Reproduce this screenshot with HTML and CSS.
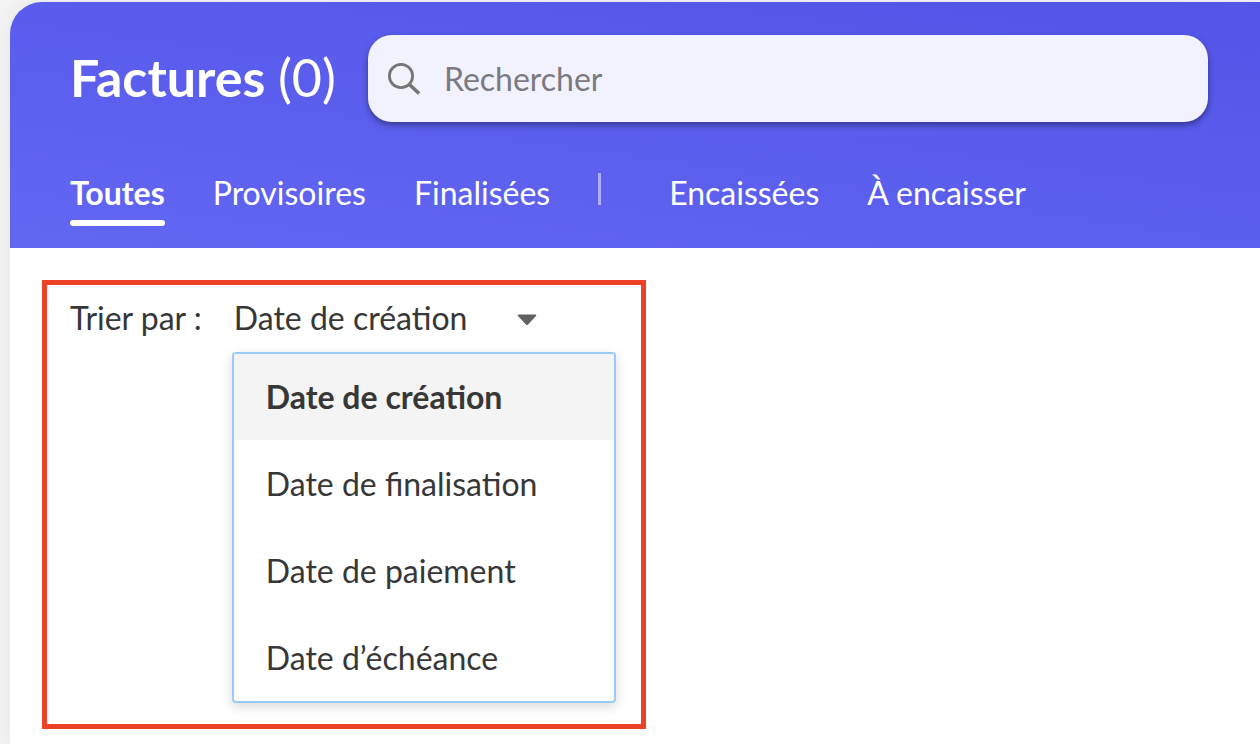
FILE: index.html
```html
<!DOCTYPE html>
<html lang="fr">
<head>
  <meta charset="UTF-8">
  <meta name="viewport" content="width=device-width, initial-scale=1.0">
  <title>Factures</title>
  <link rel="stylesheet" href="styles.css">
</head>
<body>

  <main class="page">
    <header class="header">
      <div class="header-top">
        <h1 class="title">Factures <span class="count">(0)</span></h1>
        <label class="search">
          <svg class="search-icon" width="32" height="32" viewBox="0 0 32 32" fill="none" stroke="#757575" aria-hidden="true">
            <circle cx="13" cy="13" r="11.6" stroke-width="2.8"/>
            <path d="M21.5 21.5L31 30.5" stroke-width="3.6"/>
          </svg>
          <input class="search-input" type="search" placeholder="Rechercher" aria-label="Rechercher">
        </label>
      </div>

      <nav class="tabs">
        <a class="tab active" href="#toutes">Toutes</a>
        <a class="tab" href="#provisoires">Provisoires</a>
        <a class="tab" href="#finalisees">Finalisées</a>
        <span class="divider"></span>
        <a class="tab" href="#encaissees">Encaissées</a>
        <a class="tab" href="#a-encaisser">À encaisser</a>
      </nav>
    </header>

    <section class="sort">
      <label class="sort-label" for="sort">Trier par :</label>
      <div class="sort-field">
        <div class="select-wrap">
          <select class="sort-select" id="sort">
            <option>Date de création</option>
            <option>Date de finalisation</option>
            <option>Date de paiement</option>
            <option>Date d’échéance</option>
          </select>
          <svg class="caret" width="20" height="12" viewBox="0 0 20 12" aria-hidden="true">
            <path d="M1.5 0.5H18.5Q20 0.8 19 2L11 10.5Q10 11.5 9 10.5L1 2Q0 0.8 1.5 0.5Z" fill="#616161"/>
          </svg>
        </div>
        <ul class="menu">
          <li><button type="button" class="menu-item selected">Date de création</button></li>
          <li><button type="button" class="menu-item">Date de finalisation</button></li>
          <li><button type="button" class="menu-item">Date de paiement</button></li>
          <li><button type="button" class="menu-item">Date d’échéance</button></li>
        </ul>
      </div>
    </section>
  </main>

  <script>
    const sortSelect = document.getElementById('sort');
    const items = document.querySelectorAll('.menu-item');

    items.forEach((item, index) => {
      item.addEventListener('click', () => {
        sortSelect.selectedIndex = index;
        items.forEach(other => other.classList.toggle('selected', other === item));
      });
    });
  </script>

</body>
</html>
```
FILE: styles.css
```css
* {
  box-sizing: border-box;
}

body {
  margin: 0;
  padding: 2px 0 0 10px;
  background: #f3f3f3;
  color: #373737;
  font-family: Lato, sans-serif;
  font-size: 32px;
  line-height: 40px;
}

input, select, button {
  font: inherit;
  color: inherit;
}

.page {
  min-height: calc(100vh - 2px);
  background: #fff;
  border-radius: 32px 0 0 0;
  box-shadow: 0 0 20px rgba(0, 0, 0, 0.06);
}

.header {
  padding: 33px 52px 22px 60px;
  background: linear-gradient(8deg, #6267f2 0%, #5354e8 100%);
  border-radius: 32px 0 0 0;
  color: #fff;
}

.header-top {
  display: flex;
  align-items: center;
  gap: 32px;
}

.title {
  margin: 0;
  padding-bottom: 4px;
  font-size: 52px;
  font-weight: bold;
  line-height: 64px;
  white-space: nowrap;
}

.count {
  font-weight: normal;
}

.search {
  display: flex;
  flex: 1;
  align-items: center;
  gap: 24px;
  padding: 20px;
  background: #f2f2ff;
  border-radius: 24px;
  box-shadow: 0 3px 6px rgba(0, 0, 0, 0.4);
}

.search-input {
  flex: 1;
  min-width: 0;
  height: 47px;
  padding: 0;
  border: 0;
  outline: 0;
  background: none;
  color: #373737;
}

.search-input::placeholder {
  color: #7a7a80;
}

.tabs {
  display: flex;
  gap: 48px;
  margin-top: 51px;
}

.tab {
  padding-bottom: 13px;
  color: #fff;
  text-decoration: none;
}

.tab.active {
  position: relative;
  font-weight: bold;
}

.tab.active::after {
  content: "";
  position: absolute;
  left: 0;
  right: 0;
  bottom: 0;
  height: 6px;
  border-radius: 3px;
  background: #fff;
}

.divider {
  width: 3px;
  height: 32px;
  margin-right: 20px;
  background: rgba(255, 255, 255, 0.5);
}

.sort {
  display: flex;
  width: fit-content;
  margin: 32px;
  padding: 13px 25px 21px 23px;
  border: 5px solid #ee4027;
}

.sort-label {
  margin-right: 30px;
}

.sort-field {
  width: 384px;
}

.select-wrap {
  display: flex;
  align-items: center;
  padding-left: 2px;
}

.sort-select {
  width: 283px;
  height: 40px;
  padding: 0;
  border: 0;
  outline: 0;
  appearance: none;
  background: none;
}

.caret {
  margin-top: 4px;
}

.menu {
  display: grid;
  gap: 1px;
  margin: 14px 0 0;
  padding: 0;
  list-style: none;
  background: #fff;
  border: 2px solid #99caf8;
  border-radius: 4px;
  box-shadow: 0 4px 12px rgba(0, 0, 0, 0.15);
}

.menu-item {
  display: block;
  width: 100%;
  height: 86px;
  padding: 0 32px;
  border: 0;
  background: none;
  text-align: left;
  cursor: pointer;
}

.menu-item:hover,
.menu-item.selected {
  background: #f4f4f4;
}

.menu-item.selected {
  font-weight: bold;
}
```
